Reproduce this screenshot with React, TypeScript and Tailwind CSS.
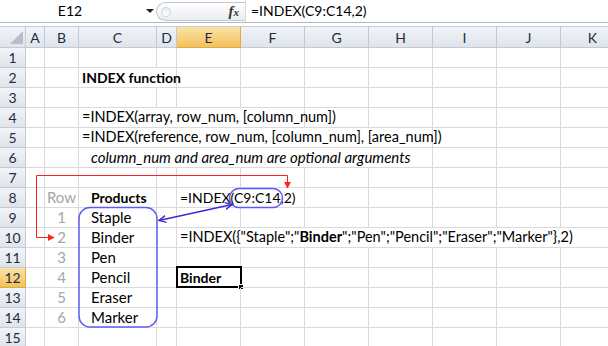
import React from "react";

type Cell = { span?: number; text?: React.ReactNode; cls?: string; selected?: boolean };

const COLS = ["A", "B", "C", "D", "E", "F", "G", "H", "I", "J", "K"];

const SPAN: Record<number, string> = {
  1: "",
  2: "col-span-2",
  4: "col-span-4",
  6: "col-span-6",
  7: "col-span-7",
};

const gray = "text-[#a6a6a6] justify-center text-[15px]";
const item = "text-black pl-[12px] text-[15px]";

const SHEET: Record<number, Record<string, Cell>> = {
  2: { C: { span: 2, text: "INDEX function", cls: "text-black font-bold pl-[3px] text-[14px]" } },
  4: {
    C: { span: 4, text: "=INDEX(array, row_num, [column_num])", cls: "text-black pl-[3px] text-[14.5px]" },
  },
  5: {
    C: {
      span: 6,
      text: "=INDEX(reference, row_num, [column_num], [area_num])",
      cls: "text-black pl-[3px] text-[14.5px]",
    },
  },
  6: {
    C: {
      span: 6,
      text: "column_num and area_num are optional arguments",
      cls: "text-black italic pl-[12px] text-[15px]",
    },
  },
  8: {
    B: { text: "Row", cls: gray },
    C: { text: "Products", cls: "text-black font-bold pl-[12px] text-[14px]" },
    E: { span: 2, text: "=INDEX(C9:C14,2)", cls: "text-black pl-[3px] text-[14px]" },
  },
  9: { B: { text: "1", cls: gray }, C: { text: "Staple", cls: item } },
  10: {
    B: { text: "2", cls: gray },
    C: { text: "Binder", cls: item },
    E: {
      span: 7,
      cls: "text-black pl-[3px] text-[14.5px]",
      text: (
        <>
          =INDEX({"{"}"Staple";"<b>Binder</b>";"Pen";"Pencil";"Eraser";"Marker"{"}"},2)
        </>
      ),
    },
  },
  11: { B: { text: "3", cls: gray }, C: { text: "Pen", cls: item } },
  12: {
    B: { text: "4", cls: gray },
    C: { text: "Pencil", cls: item },
    E: { text: "Binder", cls: "text-black font-bold pl-[3px] text-[14px]", selected: true },
  },
  13: { B: { text: "5", cls: gray }, C: { text: "Eraser", cls: item } },
  14: { B: { text: "6", cls: gray }, C: { text: "Marker", cls: item } },
};

const headBase =
  "flex items-center justify-center border-r border-b text-[14px] text-[#1d2c44] bg-gradient-to-b";
const headIdle = "border-[#c3cad5] from-[#f1f4f8] to-[#dfe4eb]";
const headActive = "border-[#e2a948] from-[#fbe3a5] to-[#f2c158]";

function FormulaBar() {
  return (
    <div className="flex h-[23px] border-b border-[#aeb6c1] bg-white">
      <div className="flex w-[156px] items-center">
        <div className="w-[140px] text-center text-[14px] leading-none text-black">E12</div>
        <div className="ml-[6px] h-0 w-0 border-x-[4px] border-t-[4px] border-x-transparent border-t-[#222]" />
      </div>
      <div className="mt-[2px] flex h-[19px] w-[89px] items-center rounded-l-full border border-r-0 border-[#c3c9d2] bg-gradient-to-b from-white to-[#e9ecf0]">
        <div className="ml-[4px] h-[10px] w-[10px] rounded-full border border-[#cfd4da] bg-gradient-to-b from-[#e8ebef] to-white" />
        <div className="ml-auto mr-[6px] font-[family-name:'Liberation_Serif',serif] text-[15px] font-bold italic leading-none text-[#333]">
          f<span className="text-[11px]">x</span>
        </div>
      </div>
      <div className="flex flex-1 items-center border-l border-[#d5d9df] pl-[5px] text-[14px] leading-none text-black">
        =INDEX(C9:C14,2)
      </div>
    </div>
  );
}

function Header() {
  return (
    <>
      <div className={`relative h-[21px] ${headBase} ${headIdle}`}>
        <div className="absolute right-[2px] bottom-[3px] h-0 w-0 border-b-[13px] border-l-[13px] border-b-[#b7bec8] border-l-transparent" />
      </div>
      {COLS.map((c) => (
        <div key={c} className={`h-[21px] ${headBase} ${c === "E" ? headActive : headIdle}`}>
          {c}
        </div>
      ))}
    </>
  );
}

function Row({ n }: { n: number }) {
  const spec = SHEET[n] || {};
  const cells: React.ReactNode[] = [];
  let i = 0;
  while (i < COLS.length) {
    const id = COLS[i];
    const cell = spec[id];
    const span = cell?.span || 1;
    cells.push(
      <div
        key={id}
        className={`relative flex h-[20px] items-center whitespace-nowrap border-r border-b border-[#dadada] leading-none ${SPAN[span]} ${cell?.cls || ""}`}
      >
        {cell?.text}
        {cell?.selected && (
          <div className="absolute -left-[1px] -top-[2px] h-[22px] w-[66px] border-2 border-black">
            <div className="absolute -right-[4px] -bottom-[4px] h-[6px] w-[6px] border border-white bg-black" />
          </div>
        )}
      </div>
    );
    i += span;
  }
  return (
    <>
      <div className={`h-[20px] ${headBase} ${n === 12 ? headActive : headIdle}`}>{n}</div>
      {cells}
    </>
  );
}

function Annotations() {
  return (
    <svg className="pointer-events-none absolute left-0 top-0" width={608} height={346}>
      <defs>
        <marker
          id="blueHead"
          viewBox="0 0 8 8"
          refX="7"
          refY="4"
          markerWidth="8"
          markerHeight="8"
          markerUnits="userSpaceOnUse"
          orient="auto-start-reverse"
        >
          <path d="M0,0.5 L7,4 L0,7.5" fill="none" stroke="#3b2ad1" strokeWidth="1.4" />
        </marker>
        <marker
          id="redHead"
          viewBox="0 0 8 8"
          refX="7"
          refY="4"
          markerWidth="7"
          markerHeight="7"
          markerUnits="userSpaceOnUse"
          orient="auto-start-reverse"
        >
          <path d="M0,0.5 L7,4 L0,7.5 Z" fill="#ff2020" stroke="#ff2020" strokeWidth="0.8" />
        </marker>
      </defs>
      {/* range C9:C14 */}
      <rect x={79} y={207.5} width={78} height={119.5} rx={11} fill="none" stroke="#5f5cf6" strokeWidth={1.5} />
      {/* reference inside the formula */}
      <rect x={229.5} y={188.5} width={53} height={19} rx={9.5} fill="none" stroke="#5f5cf6" strokeWidth={1.5} />
      <line
        x1={159}
        y1={220.5}
        x2={232}
        y2={204.5}
        stroke="#3b2ad1"
        strokeWidth={1.5}
        markerStart="url(#blueHead)"
        markerEnd="url(#blueHead)"
      />
      {/* row_num 2 -> row 2 of the range */}
      <path
        d="M54 237.5 H36.5 V175.5 H287.5 V188"
        fill="none"
        stroke="#ff2020"
        strokeWidth={1}
        markerStart="url(#redHead)"
        markerEnd="url(#redHead)"
      />
    </svg>
  );
}

export default function App() {
  const rows = Array.from({ length: 15 }, (_, k) => k + 1);
  return (
    <div className="relative h-[346px] w-[608px] overflow-hidden bg-white font-[family-name:Lato,'Open_Sans',sans-serif]">
      <FormulaBar />
      <div className="h-[4px] border-b border-[#c7ced8] bg-white" />
      <div className="grid w-[625px] grid-cols-[26px_19px_34px_78px_20px_64px_64px_64px_64px_64px_64px_64px]">
        <Header />
        {rows.map((n) => (
          <Row key={n} n={n} />
        ))}
      </div>
      <Annotations />
    </div>
  );
}
